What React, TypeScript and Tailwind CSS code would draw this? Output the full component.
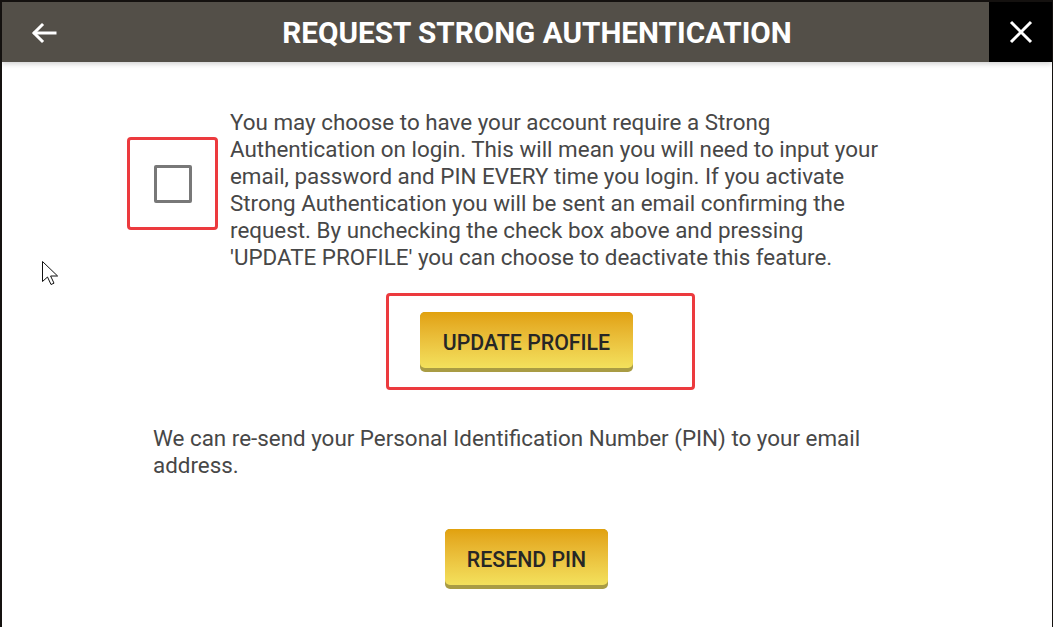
import React, { useState } from 'react';

function YellowButton({ label, className }: { label: string; className: string }) {
  return (
    <button
      type="button"
      className={`h-[60px] rounded-[5px] bg-[#a99c44] pb-[4px] ${className}`}
    >
      <span className="flex h-full w-full items-center justify-center rounded-[5px] bg-gradient-to-b from-[#e1a10c] to-[#f3e15c] pt-[5px] text-[21.3px] font-medium text-[#262626]">
        {label}
      </span>
    </button>
  );
}

export default function App() {
  const [checked, setChecked] = useState(false);

  return (
    <div
      className="relative min-h-[627px] w-[1053px] bg-[#151210] pt-[2px] pl-[2px]"
      style={{ fontFamily: 'Roboto, "Liberation Sans", sans-serif' }}
    >
      <div className="h-[625px] w-[1050px] bg-white">
        {/* header */}
        <div className="relative flex h-[60px] bg-[#534f48] shadow-[0_2px_5px_rgba(0,0,0,0.18)]">
          <button type="button" className="flex w-[83px] items-center pl-[29px] pt-[2px] text-white">
            <svg width="26" height="22" viewBox="0 0 26 22" fill="none" stroke="currentColor" strokeWidth="3" strokeLinecap="square">
              <path d="M24 11H4" />
              <path d="M11 3l-8 8 8 8" />
            </svg>
          </button>
          <h1 className="flex flex-1 items-center justify-center pt-[2px] text-[29.7px] font-bold text-white">
            REQUEST STRONG AUTHENTICATION
          </h1>
          <button type="button" className="flex w-[63px] items-center justify-center bg-black text-white">
            <svg width="24" height="24" viewBox="0 0 24 24" fill="none" stroke="currentColor" strokeWidth="3">
              <path d="M2 2l20 20M22 2L2 22" />
            </svg>
          </button>
        </div>

        {/* body */}
        <div className="pl-[125px] pt-[47px]">
          <div className="flex items-start gap-[12px]">
            <div className="mt-[28px] flex h-[93px] w-[91px] shrink-0 items-center justify-center rounded-[4px] border-[3px] border-[#ec3a3e]">
              <button
                type="button"
                onClick={() => setChecked(!checked)}
                className="ml-[1px] h-[38px] w-[38px] rounded-[2px] border-[3px] border-[#787878] bg-white"
              />
            </div>
            <p className="w-[680px] whitespace-nowrap text-[22.4px] leading-[27px] text-[#474747]">
              You may choose to have your account require a Strong
              <br />
              Authentication on login. This will mean you will need to input your
              <br />
              email, password and PIN EVERY time you login. If you activate
              <br />
              Strong Authentication you will be sent an email confirming the
              <br />
              request. By unchecking the check box above and pressing
              <br />
              'UPDATE PROFILE' you can choose to deactivate this feature.
            </p>
          </div>

          <div className="ml-[259px] mt-[22px] flex h-[97px] w-[309px] items-start rounded-[4px] border-[3px] border-[#ec3a3e] pl-[31px] pt-[16px]">
            <YellowButton label="UPDATE PROFILE" className="w-[213px]" />
          </div>

          <p className="ml-[26px] mt-[35px] w-[760px] whitespace-nowrap text-[22.4px] leading-[27px] text-[#474747]">
            We can re-send your Personal Identification Number (PIN) to your email
            <br />
            address.
          </p>

          <YellowButton label="RESEND PIN" className="ml-[318px] mt-[50px] w-[163px]" />
        </div>
      </div>

      {/* mouse pointer */}
      <svg className="absolute left-[41px] top-[260px]" width="20" height="30" viewBox="0 0 20 30">
        <path d="M1.5 1.5v20l5-4.5 3.5 7.5 3-1.3-3.4-7.2h7z" fill="white" stroke="#111" strokeWidth="1" strokeLinejoin="round" />
      </svg>
    </div>
  );
}
